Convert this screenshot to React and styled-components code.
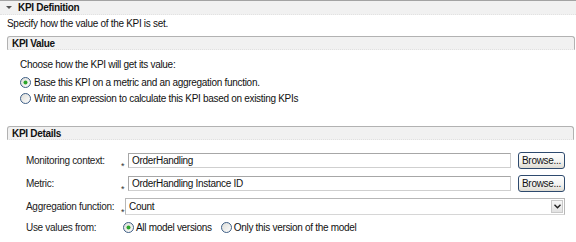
import React from "react";
import styled, { createGlobalStyle } from "styled-components";

const Global = createGlobalStyle`
  html, body { margin: 0; padding: 0; background: #ffffff; }
  body {
    font-family: "Liberation Sans", Arial, sans-serif;
    font-size: 10px;
    letter-spacing: -0.3px;
    color: #111;
  }
`;

const Page = styled.div`
  width: 576px;
  height: 242px;
  overflow: hidden;
  display: flex;
  flex-direction: column;
`;

const DefHeader = styled.div`
  border-top: 1px solid #a3a3a3;
  height: 13px;
  background: #f1f1f1;
  border-bottom: 1px dotted #e2e2e2;
  display: flex;
  align-items: center;
  gap: 6px;
  padding-left: 6px;
  font-weight: bold;
  line-height: 13px;
`;

const Triangle = styled.span`
  width: 0;
  height: 0;
  border-left: 3px solid transparent;
  border-right: 3px solid transparent;
  border-top: 3px solid #555;
`;

const Description = styled.div`
  padding-left: 7px;
  margin-top: 2px;
  line-height: 14px;
`;

const Section = styled.section`
  margin: ${(p) => p.$top}px ${(p) => p.$right}px 0 7px;
  display: flex;
  flex-direction: column;
`;

const SectionHeader = styled.div`
  height: 12px;
  border: 1px solid #b2b2b2;
  border-bottom: 1px dotted #e0e0e0;
  border-radius: 3px 3px 0 0;
  background: #f1f1f1;
  padding-left: 4px;
  font-weight: bold;
  line-height: 13px;
`;

const ValueBody = styled.div`
  padding: 8px 0 0 13px;
  display: flex;
  flex-direction: column;
`;

const Line = styled.div`
  line-height: 14px;
  margin-bottom: 2px;
`;

const RadioRow = styled.label`
  display: flex;
  align-items: center;
  gap: ${(p) => p.$gap || 3}px;
  height: 16px;
`;

const DetailsBody = styled.div`
  padding: 12px 9px 0 19px;
  display: flex;
  flex-direction: column;
  gap: 6px;
`;

const FieldRow = styled.div`
  display: flex;
  align-items: center;
  height: 17px;
`;

const Label = styled.span`
  width: 95px;
  flex: none;
  color: #222;
`;

const Required = styled.span`
  width: 7px;
  flex: none;
  align-self: flex-end;
  font-size: 9px;
  line-height: 6px;
  color: #333;
`;

const TextInput = styled.div`
  flex: 1;
  height: 15px;
  box-sizing: border-box;
  border: 1px solid #a7a7a7;
  border-right-color: #cfcfcf;
  border-bottom-color: #cfcfcf;
  padding-left: 3px;
  line-height: 13px;
  background: #fff;
`;

const BrowseButton = styled.button`
  margin-left: 7px;
  width: 47px;
  height: 17px;
  flex: none;
  box-sizing: border-box;
  border: 1px solid #2e4a6e;
  border-radius: 3px;
  background: linear-gradient(#ffffff, #f2f2ef 60%, #dedbd2);
  font-family: inherit;
  font-size: 10px;
  letter-spacing: -0.3px;
  color: #111;
  padding: 0;
  line-height: 15px;
`;

const Select = styled.div`
  flex: 1;
  margin-left: -3px;
  height: 17px;
  box-sizing: border-box;
  border: 1px solid #b7b7b7;
  border-bottom-color: #d6d6d6;
  display: flex;
  align-items: center;
  justify-content: space-between;
  padding-left: 3px;
  padding-right: 1px;
`;

const DropButton = styled.span`
  width: 12px;
  height: 13px;
  box-sizing: border-box;
  border: 1px solid #c9c9c9;
  background: linear-gradient(#f7f7f7, #e2e2e2);
  display: flex;
  align-items: center;
  justify-content: center;
`;

const OptionsRow = styled.div`
  display: flex;
  align-items: center;
  height: 16px;
  margin-top: -2px;
`;

const RadioGroup = styled.div`
  display: flex;
  align-items: center;
  gap: 9px;
  margin-left: 2px;
`;

function Radio({ checked }) {
  return (
    <svg width="11" height="11" viewBox="0 0 11 11">
      <defs>
        <linearGradient id={checked ? "rg1" : "rg0"} x1="0" y1="0" x2="1" y2="1">
          <stop offset="0" stopColor="#dcdcd7" />
          <stop offset="1" stopColor="#ffffff" />
        </linearGradient>
      </defs>
      <circle cx="5.5" cy="5.5" r="5" fill={`url(#${checked ? "rg1" : "rg0"})`} stroke="#3f5f86" strokeWidth="1" />
      {checked && <circle cx="5.5" cy="5.5" r="2" fill="#2ca52c" />}
    </svg>
  );
}

export default function App() {
  return (
    <Page>
      <Global />
      <DefHeader>
        <Triangle />
        KPI Definition
      </DefHeader>
      <Description>Specify how the value of the KPI is set.</Description>

      <Section $top={5} $right={1}>
        <SectionHeader>KPI Value</SectionHeader>
        <ValueBody>
          <Line>Choose how the KPI will get its value:</Line>
          <RadioRow>
            <Radio checked />
            Base this KPI on a metric and an aggregation function.
          </RadioRow>
          <RadioRow>
            <Radio />
            Write an expression to calculate this KPI based on existing KPIs
          </RadioRow>
        </ValueBody>
      </Section>

      <Section $top={20} $right={2}>
        <SectionHeader>KPI Details</SectionHeader>
        <DetailsBody>
          <FieldRow>
            <Label>Monitoring context:</Label>
            <Required>*</Required>
            <TextInput>OrderHandling</TextInput>
            <BrowseButton>Browse...</BrowseButton>
          </FieldRow>
          <FieldRow>
            <Label>Metric:</Label>
            <Required>*</Required>
            <TextInput>OrderHandling Instance ID</TextInput>
            <BrowseButton>Browse...</BrowseButton>
          </FieldRow>
          <FieldRow>
            <Label>Aggregation function:</Label>
            <Required>*</Required>
            <Select>
              Count
              <DropButton>
                <svg width="7" height="5" viewBox="0 0 7 5">
                  <path d="M0.5 0.8 L3.5 3.8 L6.5 0.8" fill="none" stroke="#222" strokeWidth="1.4" />
                </svg>
              </DropButton>
            </Select>
          </FieldRow>
          <OptionsRow>
            <Label>Use values from:</Label>
            <RadioGroup>
              <RadioRow $gap={2}>
                <Radio checked />
                All model versions
              </RadioRow>
              <RadioRow $gap={2}>
                <Radio />
                Only this version of the model
              </RadioRow>
            </RadioGroup>
          </OptionsRow>
        </DetailsBody>
      </Section>
    </Page>
  );
}
